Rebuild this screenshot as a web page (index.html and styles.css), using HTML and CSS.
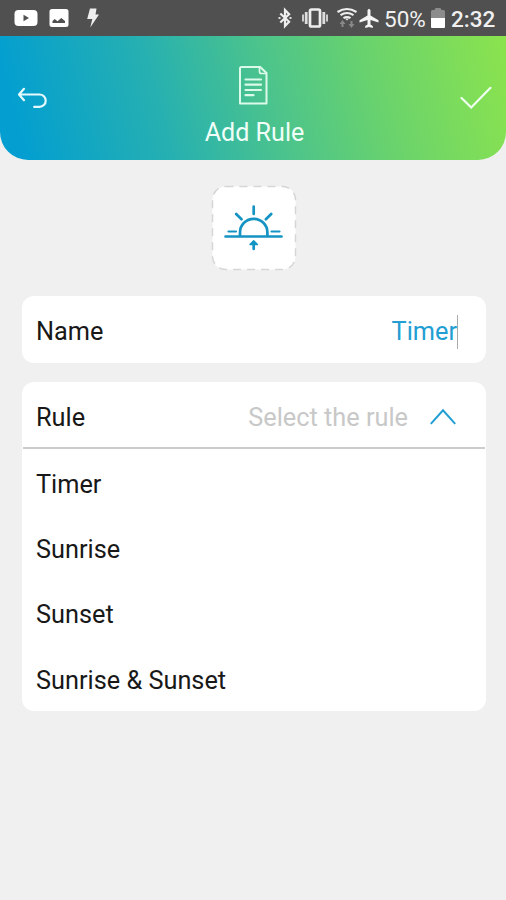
FILE: index.html
```html
<!DOCTYPE html>
<html lang="en">
<head>
<meta charset="utf-8">
<title>Add Rule</title>
<link rel="stylesheet" href="styles.css">
</head>
<body>
<div class="status">
  <svg class="youtube" width="24" height="18" viewBox="0 0 24 18"><rect x=".5" y="1" width="23" height="16" rx="4" fill="#fff"/><path d="M9.500 5.700v6.600l5.500-3.300z" fill="#505050"/></svg>
  <svg class="photo" width="20" height="20" viewBox="0 0 20 20"><rect x=".5" y="1" width="19" height="18" rx="2.500" fill="#fff"/><path d="M3.500 15v-2l2.200-2 2.800 2.200 3.800-3.200 3.700 3v2z" fill="#505050"/></svg>
  <svg class="bolt" width="14" height="22" viewBox="0 0 14 22"><path d="M4 1.500h6.500L9.500 7.500H13L4.300 20.500l2-8.500H1.200z" fill="#eee"/></svg>
  <div class="tray">
    <svg class="bluetooth" width="14" height="22" viewBox="0 0 14 22"><path d="M2.300 6.500l8.800 8.300L7 19V3l4.100 4.200-8.800 8.300" fill="none" stroke="#eee" stroke-width="2.200"/><path d="M.5 10h2v2h-2zM11.500 10h2v2h-2z" fill="#ddd"/></svg>
    <svg class="vibrate" width="28" height="20" viewBox="0 0 28 20"><rect x="9" y="1.500" width="10" height="17" rx="1.500" fill="none" stroke="#eee" stroke-width="2.700"/><path d="M5.200 4v12M22.800 4v12" stroke="#ddd" stroke-width="2.800"/><path d="M2 6.500v7M26 6.500v7" stroke="#ccc" stroke-width="2"/></svg>
    <svg class="wifi" width="22" height="22" viewBox="0 0 22 22"><path d="M1.500 5q9.500-6 19 0M4.500 8.200q6.500-4.500 13 0M7.500 11.200q3.500-2.500 7 0" fill="none" stroke="#eee" stroke-width="2.100"/><path d="M9 11.500h4l-2 2z" fill="#eee"/><path d="M6.500 20v-5M15.500 14v5" stroke="#888" stroke-width="2"/><path d="M3.500 17l3-4 3 4zM12.500 17l3 4 3-4z" fill="#888"/></svg>
    <svg class="plane" width="20" height="20" viewBox="0 0 20 20"><path d="M8.500 2.300q1.500-3 3 0V7.500l8 4.700v2.200l-8-2.500v4.500l2.300 1.700V20L10 19l-3.800 1v-1.900l2.300-1.700v-4.500l-8 2.500v-2.200l8-4.700z" fill="#f4f4f4"/></svg>
    <span class="percent">50%</span>
    <svg class="battery" width="14" height="22" viewBox="0 0 14 22"><path d="M0 4.500q0-1.500 1.500-1.500H3.500l1-2h5l1 2h2q1.500 0 1.500 1.500V11H0z" fill="#8c8c8c"/><path d="M0 11h14v9q0 1-1 1H1q-1 0-1-1z" fill="#fff"/></svg>
    <span class="time">2:32</span>
  </div>
</div>
<header class="header">
  <svg class="back" width="32" height="24" viewBox="0 0 32 24"><path d="M7 1.800L2 7.500l5 5.700M2.500 7.500H22.500a6.200 6.200 0 0 1 0 12.400h-5.300" fill="none" stroke="#e5faff" stroke-width="2.200" stroke-linecap="round" stroke-linejoin="round"/></svg>
  <div class="heading">
    <svg class="doc" width="32" height="40" viewBox="0 0 32 40"><path d="M3.500 1h18.700l6.300 6v30.500H2V2.500Q2 1 3.500 1z" fill="none" stroke="#dcfaea" stroke-width="2" stroke-linejoin="round"/><path d="M21.500 1.500v4q0 2 2 2h4.800" fill="none" stroke="#dcfaea" stroke-width="1.700"/><path d="M7.500 13.500h15.500M7.500 18.700h15.500M7.500 24h15.500M7.500 29.200h8" stroke="#dcfaea" stroke-width="2.200" stroke-linecap="round"/></svg>
    <h1 class="title">Add Rule</h1>
  </div>
  <svg class="check" width="32" height="24" viewBox="0 0 32 24"><path d="M1.500 12l9.700 9.500L30.500 1.800" fill="none" stroke="#effff0" stroke-width="2.200" stroke-linecap="round"/></svg>
</header>
<main class="content">
  <div class="picker">
    <svg width="86" height="86" viewBox="0 0 86 86"><rect x="1.500" y="1.500" width="83" height="83" rx="13" fill="#fff" stroke="#d6d6d6" stroke-width="1.500" stroke-dasharray="8 6"/><g fill="none" stroke="#1594c4" stroke-width="2.700" stroke-linecap="round"><path d="M14.500 51.500h56M29 51V47.500a13.700 13.700 0 0 1 27.400 0v3.500M42.700 21.500v7.500M25.200 29l5.300 5.300M60.200 29l-5.300 5.300"/><path d="M17.500 46.500h7.500M60.500 46.500h8" stroke-width="2.200"/><path d="M42.700 58v6"/></g><path d="M39 59.500l3.700-3.700 3.700 3.700z" fill="#1594c4" stroke="#1594c4" stroke-width="1.500" stroke-linejoin="round"/></svg>
  </div>
  <div class="card row name">
    <span>Name</span>
    <span class="value">Timer</span>
  </div>
  <section class="card">
    <div class="row rule">
      <span>Rule</span>
      <span class="placeholder">Select the rule</span>
      <svg width="28" height="18" viewBox="0 0 28 18"><path d="M1.800 15.800L14 2.300l12.200 13.500" fill="none" stroke="#229ed3" stroke-width="2"/></svg>
    </div>
    <ul class="options">
      <li>Timer</li>
      <li>Sunrise</li>
      <li>Sunset</li>
      <li>Sunrise &amp; Sunset</li>
    </ul>
  </section>
</main>
</body>
</html>
```
FILE: styles.css
```css
* { box-sizing: border-box; }
body { margin: 0; min-height: 900px; background: #f0f0f0; color: #181818; font: 25.300px/30px Roboto, sans-serif; }
svg { display: block; flex: none; }
.status { height: 36px; display: flex; align-items: center; background: #505050; color: #f0f0f0; padding: 0 10px 0 14px; }
.photo { margin-left: 11px; }
.bolt { margin-left: 17px; }
.tray { margin-left: auto; display: flex; align-items: center; }
.bluetooth { margin-right: 1px; }
.vibrate { margin-left: 8px; }
.wifi { margin-left: 7px; }
.plane { margin-left: 1px; }
.percent { width: 47px; padding: 1px 0 0 5px; font-size: 22.500px; }
.battery { margin-right: 6px; margin-left: 5px; }
.time { width: 45px; padding-top: 2px; font-size: 22.500px; font-weight: 500; white-space: nowrap; }
.header { height: 124px; display: flex; justify-content: space-between; align-items: flex-start; padding: 0 14px 0 17px; border-radius: 0 0 28px 28px; background: linear-gradient(75deg, #049fd0 5%, #26b0b1 32%, #4bc38d 53%, #6ad36c 74%, #8be34d 100%); color: #effff8; }
.back { margin-top: 51px; }
.check { margin-top: 50px; }
.heading { display: flex; flex-direction: column; align-items: center; padding-top: 30px; }
.title { margin: 12px 0 0; font-size: 25.100px; line-height: 30px; font-weight: 400; }
.content { padding: 25px 20px 0 22px; }
.picker { display: flex; justify-content: center; margin: 0 1px 25px 0; }
.card { background: #fff; border-radius: 12px; }
.row { display: flex; align-items: center; padding: 0 28px 0 14px; }
.name { height: 67px; margin-bottom: 19px; padding-top: 4px; justify-content: space-between; }
.value { color: #229ed3; border-right: 1px solid #aaa; line-height: 34px; }
.rule { height: 67px; margin: 0 1px; padding: 7px 28px 0 13px; border-bottom: 2px solid #ccc; }
.rule svg { margin-top: -3px; }
.placeholder { margin: 0 21px 0 auto; color: #c8c8c8; }
.options { list-style: none; margin: 0; padding: 2.500px 14px 0; height: 262px; }
.options li { height: 65.400px; line-height: 65.400px; }
```
